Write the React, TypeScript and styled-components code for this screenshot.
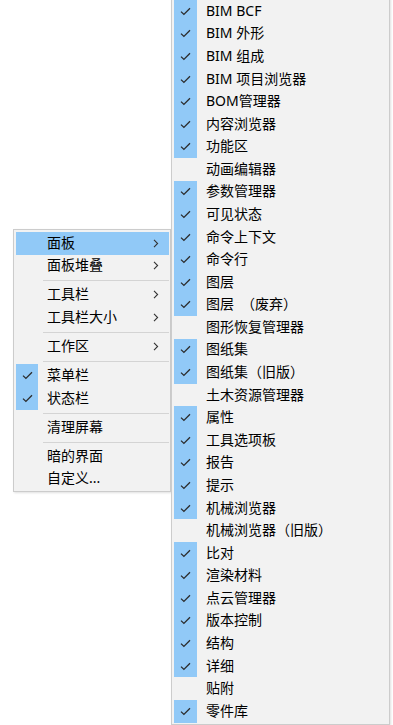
import React from "react";
import styled, { createGlobalStyle } from "styled-components";

const GlobalStyle = createGlobalStyle`
  html, body {
    margin: 0;
    padding: 0;
    background: #ffffff;
  }
  body {
    font-family: "Noto Sans", "Noto Sans CJK SC", sans-serif;
    overflow: hidden;
  }
`;

type Entry = { label: string; checked?: boolean; sub?: boolean } | "sep";

const leftItems: Entry[] = [
  { label: "面板", sub: true },
  { label: "面板堆叠", sub: true },
  "sep",
  { label: "工具栏", sub: true },
  { label: "工具栏大小", sub: true },
  "sep",
  { label: "工作区", sub: true },
  "sep",
  { label: "菜单栏", checked: true },
  { label: "状态栏", checked: true },
  "sep",
  { label: "清理屏幕" },
  "sep",
  { label: "暗的界面" },
  { label: "自定义..." },
];

const panels: [string, boolean][] = [
  ["BIM BCF", true],
  ["BIM 外形", true],
  ["BIM 组成", true],
  ["BIM 项目浏览器", true],
  ["BOM管理器", true],
  ["内容浏览器", true],
  ["功能区", true],
  ["动画编辑器", false],
  ["参数管理器", true],
  ["可见状态", true],
  ["命令上下文", true],
  ["命令行", true],
  ["图层", true],
  ["图层　（废弃）", true],
  ["图形恢复管理器", false],
  ["图纸集", true],
  ["图纸集（旧版）", true],
  ["土木资源管理器", false],
  ["属性", true],
  ["工具选项板", true],
  ["报告", true],
  ["提示", true],
  ["机械浏览器", true],
  ["机械浏览器（旧版）", false],
  ["比对", true],
  ["渲染材料", true],
  ["点云管理器", true],
  ["版本控制", true],
  ["结构", true],
  ["详细", true],
  ["贴附", false],
  ["零件库", true],
];

function CheckMark() {
  return (
    <svg width="11" height="9" viewBox="0 0 11 9">
      <path d="M1 4.6 L3.9 7.4 L10 1.2" fill="none" stroke="#2b2b2b" strokeWidth="1.3" />
    </svg>
  );
}

function Chevron() {
  return (
    <svg width="6" height="9" viewBox="0 0 6 9">
      <path d="M1 0.8 L4.6 4.5 L1 8.2" fill="none" stroke="#333" strokeWidth="1.1" />
    </svg>
  );
}

export default function App(): React.ReactElement {
  return (
    <>
      <GlobalStyle />
      <Stage>
        <Menu $width={158} $top={229}>
          {leftItems.map((it, i) =>
            it === "sep" ? (
              <Separator key={i} />
            ) : (
              <Row key={i} $active={i === 0} $checkWidth={22}>
                <CheckCell $on={!!it.checked} $width={22}>
                  {it.checked && <CheckMark />}
                </CheckCell>
                <Label $indent={9}>{it.label}</Label>
                {it.sub && (
                  <Arrow>
                    <Chevron />
                  </Arrow>
                )}
              </Row>
            )
          )}
        </Menu>
        <Menu $width={219} $top={-3}>
          {panels.map(([label, on]) => (
            <Row key={label} $checkWidth={23}>
              <CheckCell $on={on} $width={23}>
                {on && <CheckMark />}
              </CheckCell>
              <Label $indent={9}>{label}</Label>
            </Row>
          ))}
        </Menu>
      </Stage>
    </>
  );
}

const Stage = styled.div`
  display: flex;
  align-items: flex-start;
  padding-left: 13px;
  height: 725px;
`;

const Menu = styled.div<{ $width: number; $top: number }>`
  box-sizing: border-box;
  width: ${(p) => p.$width}px;
  margin-top: ${(p) => p.$top}px;
  padding: 2px 1px 1px 2px;
  background: #f2f2f2;
  border: 1px solid #cccccc;
  box-shadow: 1px 1px 2px rgba(0, 0, 0, 0.12);
  display: flex;
  flex-direction: column;
  & + & {
    margin-left: 0;
  }
`;

const Row = styled.div<{ $active?: boolean; $checkWidth: number }>`
  display: flex;
  align-items: center;
  height: 22.58px;
  background: ${(p) => (p.$active ? "#91c9f7" : "transparent")};
  color: #000;
  font-size: 14px;
  line-height: 1;
  white-space: nowrap;
`;

const CheckCell = styled.div<{ $on: boolean; $width: number }>`
  flex: none;
  width: ${(p) => p.$width}px;
  height: 100%;
  display: flex;
  align-items: center;
  justify-content: center;
  background: ${(p) => (p.$on ? "#91c9f7" : "transparent")};
`;

const Label = styled.span<{ $indent: number }>`
  flex: 1;
  padding-left: ${(p) => p.$indent}px;
  position: relative;
  top: -0.5px;
`;

const Arrow = styled.span`
  flex: none;
  width: 16px;
  display: flex;
  align-items: center;
`;

const Separator = styled.div`
  height: 1px;
  margin: 3px 0 2.5px 27px;
  background: #d4d4d4;
`;
